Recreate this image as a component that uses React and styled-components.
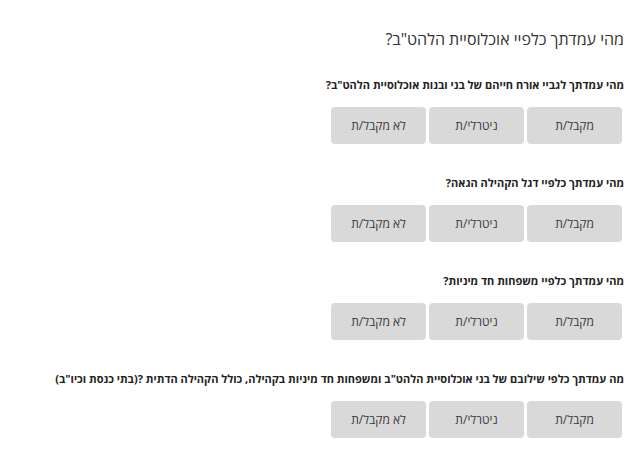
import React from 'react';
import styled, { createGlobalStyle } from 'styled-components';

const Global = createGlobalStyle`
    body {
        margin: 0;
        background: #ffffff;
        font-family: "Open Sans", "Liberation Sans", sans-serif;
    }
`;

// Contenedor principal del cuestionario
const Page = styled.div`
    direction: rtl;
    padding: 27px 16px 0 18px;
    color: #333;
`;

const Title = styled.h2`
    margin: 0 0 26px 0;
    font-size: 16px;
    font-weight: normal;
    line-height: 24px;
    color: #333;
`;

const Question = styled.div`
    margin-bottom: 31px;
`;

const QuestionText = styled.p`
    margin: 0 0 14px 0;
    font-size: 11px;
    font-weight: bold;
    line-height: 16px;
    color: #222;
`;

const Options = styled.div`
    display: flex;
    gap: 3px;
    padding-right: 2px;
`;

const Option = styled.button`
    width: 95px;
    height: 37px;
    border: none;
    border-radius: 4px;
    background: #d9d9d9;
    color: #3a3a3a;
    font-family: "Open Sans", "Liberation Sans", sans-serif;
    font-size: 12px;
    cursor: pointer;
    &:hover {
        background: #cfcfcf;
    }
`;

const questions = [
    'מהי עמדתך לגביי אורח חייהם של בני ובנות אוכלוסיית הלהט"ב?',
    'מהי עמדתך כלפיי דגל הקהילה הגאה?',
    'מהי עמדתך כלפיי משפחות חד מיניות?',
    'מה עמדתך כלפי שילובם של בני אוכלוסיית הלהט"ב ומשפחות חד מיניות בקהילה, כולל הקהילה הדתית ?(בתי כנסת וכיו"ב)',
];

const answers = ['מקבל/ת', 'ניטרלי/ת', 'לא מקבל/ת'];

const App = () => {
    return (
        <Page>
            <Global />
            <Title>מהי עמדתך כלפיי אוכלוסיית הלהט"ב?</Title>
            {questions.map((q) => (
                <Question key={q}>
                    <QuestionText>{q}</QuestionText>
                    <Options>
                        {answers.map((a) => (
                            <Option key={a}>{a}</Option>
                        ))}
                    </Options>
                </Question>
            ))}
        </Page>
    );
};

export default App;
